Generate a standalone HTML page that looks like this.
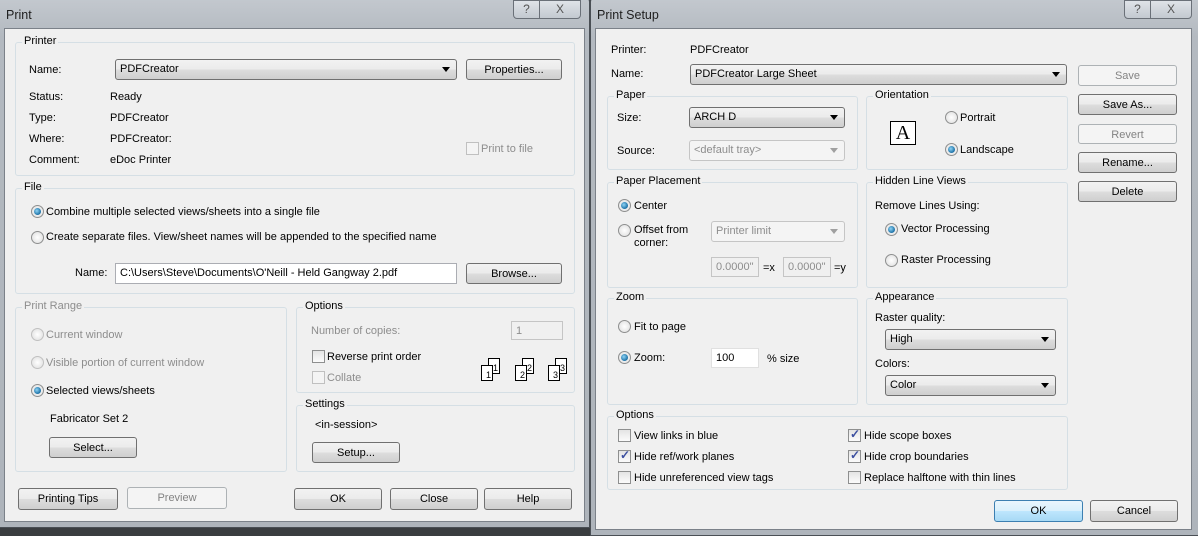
<!DOCTYPE html>
<html><head><meta charset="utf-8"><style>
*{box-sizing:border-box;margin:0;padding:0}
body{width:1198px;height:535px;position:relative;overflow:hidden;background:#3a3d40;font-family:"Liberation Sans",sans-serif;font-size:11px;color:#000}
div,span{position:absolute}
.frame{background:linear-gradient(#c4c9cf,#b3b9c0 40px,#aeb4bb);border:1px solid #4a4f55;border-radius:6px 6px 0 0}
.client{background:#f0f0f0;border:1px solid #7b8189}
.title{font-size:12.5px;color:#1e1e1e}
.tb{height:19px;border:1px solid #6a7078;background:linear-gradient(#dfe3e8,#c3c9d0);border-radius:0 0 4px 4px;color:#555;text-align:center;font-size:12px;line-height:17px}
.g{border:1px solid #d5dfe5;border-radius:3px}
.gl{background:#f0f0f0;padding:0 2px;top:-8px;left:6px;white-space:nowrap}
.t{white-space:nowrap;margin-top:1px}
.btn{border:1px solid #707070;border-radius:3px;background:linear-gradient(#f2f2f2 0,#ebebeb 50%,#dddddd 51%,#cfcfcf);text-align:center;line-height:20px;white-space:nowrap}
.dis{border-color:#adb2b5;background:#f4f4f4;color:#838383}
.combo{border:1px solid #707070;border-radius:3px;background:linear-gradient(#f2f2f2,#ebebeb 50%,#dddddd 51%,#cfcfcf);padding-left:4px;line-height:19px;white-space:nowrap}
.combo:after{content:"";position:absolute;right:6px;top:7px;border:4px solid transparent;border-top:5px solid #000;border-bottom:0}
.cdis{background:#f4f4f4;border-color:#c5c5c5;color:#8d8d8d}
.cdis:after{border-top-color:#a0a0a0}
.inp{border:1px solid #abadb3;background:#fff;padding-left:4px;line-height:19px;white-space:nowrap}
.idis{background:#f0f0f0;border-color:#c5c5c5;color:#8d8d8d}
.r{width:13px;height:13px;border-radius:50%;border:1px solid #8e8f8f;background:radial-gradient(#fff,#dcdcdc)}
.r.on:after{content:"";position:absolute;left:2px;top:2px;width:7px;height:7px;border-radius:50%;background:radial-gradient(circle at 40% 40%,#8fd4f5,#1a6fa5 70%,#0e3f64)}
.r.d{border-color:#c0c0c0}
.cb{width:13px;height:13px;border:1px solid #8e8f8f;background:linear-gradient(#e4e4e4,#fbfbfb)}
.cb.d{border-color:#c0c0c0;background:#f4f4f4}
.cb.on:after{content:"\2713";position:absolute;left:1px;top:-3px;font-size:12px;color:#3c4fa0;font-weight:bold}
.gr{color:#8d8d8d}
.pg{width:12px;height:16px;border:1px solid #000;background:#fff;font-size:9px;line-height:9px;text-align:right;padding:5px 1px 0 0}
</style></head><body>
<div class="frame" style="left:-2px;top:-4px;width:592px;height:532px"></div>
<span class="title" style="left:6px;top:8px">Print</span>
<div class="tb" style="left:513px;top:0;width:27px;border-radius:0 0 0 4px">?</div>
<div class="tb" style="left:539px;top:0;width:42px;border-radius:0 0 4px 0">X</div>
<div class="client" style="left:4px;top:28px;width:581px;height:494px"></div>

<div class="g" style="left:15px;top:42px;width:560px;height:134px"><span class="gl">Printer</span></div>
<span class="t" style="left:29px;top:63px">Name:</span>
<div class="combo" style="left:115px;top:59px;width:342px;height:21px">PDFCreator</div>
<div class="btn" style="left:466px;top:59px;width:96px;height:21px">Properties...</div>
<span class="t" style="left:29px;top:90px">Status:</span><span class="t" style="left:110px;top:90px">Ready</span>
<span class="t" style="left:29px;top:111px">Type:</span><span class="t" style="left:110px;top:111px">PDFCreator</span>
<span class="t" style="left:29px;top:132px">Where:</span><span class="t" style="left:110px;top:132px">PDFCreator:</span>
<span class="t" style="left:29px;top:153px">Comment:</span><span class="t" style="left:110px;top:153px">eDoc Printer</span>
<div class="cb d" style="left:466px;top:142px"></div><span class="t gr" style="left:481px;top:142px">Print to file</span>

<div class="g" style="left:15px;top:188px;width:560px;height:106px"><span class="gl">File</span></div>
<div class="r on" style="left:31px;top:205px"></div><span class="t" style="left:46px;top:205px">Combine multiple selected views/sheets into a single file</span>
<div class="r" style="left:31px;top:231px"></div><span class="t" style="left:46px;top:230px">Create separate files. View/sheet names will be appended to the specified name</span>
<span class="t" style="left:75px;top:266px">Name:</span>
<div class="inp" style="left:115px;top:263px;width:342px;height:21px">C:\Users\Steve\Documents\O'Neill - Held Gangway 2.pdf</div>
<div class="btn" style="left:466px;top:263px;width:96px;height:21px">Browse...</div>

<div class="g" style="left:15px;top:307px;width:272px;height:165px"><span class="gl gr">Print Range</span></div>
<div class="r d" style="left:31px;top:328px"></div><span class="t gr" style="left:46px;top:328px">Current window</span>
<div class="r d" style="left:31px;top:356px"></div><span class="t gr" style="left:46px;top:356px">Visible portion of current window</span>
<div class="r on" style="left:31px;top:384px"></div><span class="t" style="left:46px;top:384px">Selected views/sheets</span>
<span class="t" style="left:50px;top:412px">Fabricator Set 2</span>
<div class="btn" style="left:49px;top:437px;width:88px;height:21px">Select...</div>

<div class="g" style="left:296px;top:307px;width:279px;height:86px"><span class="gl">Options</span></div>
<span class="t gr" style="left:311px;top:324px">Number of copies:</span>
<div class="inp idis" style="left:511px;top:321px;width:52px;height:19px">1</div>
<div class="cb" style="left:312px;top:350px"></div><span class="t" style="left:327px;top:350px">Reverse print order</span>
<div class="cb d" style="left:312px;top:371px"></div><span class="t gr" style="left:327px;top:371px">Collate</span>
<div class="pg" style="left:488px;top:358px">1</div><div class="pg" style="left:481px;top:365px">1</div>
<div class="pg" style="left:522px;top:358px">2</div><div class="pg" style="left:515px;top:365px">2</div>
<div class="pg" style="left:555px;top:358px">3</div><div class="pg" style="left:548px;top:365px">3</div>

<div class="g" style="left:296px;top:405px;width:279px;height:67px"><span class="gl">Settings</span></div>
<span class="t" style="left:315px;top:418px">&lt;in-session&gt;</span>
<div class="btn" style="left:312px;top:442px;width:88px;height:21px">Setup...</div>

<div class="btn" style="left:18px;top:488px;width:100px;height:22px">Printing Tips</div>
<div class="btn dis" style="left:127px;top:487px;width:100px;height:22px">Preview</div>
<div class="btn" style="left:294px;top:488px;width:88px;height:22px">OK</div>
<div class="btn" style="left:390px;top:488px;width:88px;height:22px">Close</div>
<div class="btn" style="left:484px;top:488px;width:88px;height:22px">Help</div>

<div class="frame" style="left:590px;top:-4px;width:612px;height:540px"></div>
<span class="title" style="left:597px;top:8px">Print Setup</span>
<div class="tb" style="left:1124px;top:0;width:27px;border-radius:0 0 0 4px">?</div>
<div class="tb" style="left:1150px;top:0;width:42px;border-radius:0 0 4px 0">X</div>
<div class="client" style="left:595px;top:28px;width:597px;height:502px"></div>

<span class="t" style="left:611px;top:43px">Printer:</span><span class="t" style="left:690px;top:43px">PDFCreator</span>
<span class="t" style="left:611px;top:67px">Name:</span>
<div class="combo" style="left:690px;top:64px;width:377px;height:21px">PDFCreator Large Sheet</div>
<div class="btn dis" style="left:1078px;top:65px;width:99px;height:21px">Save</div>
<div class="btn" style="left:1078px;top:94px;width:99px;height:21px">Save As...</div>
<div class="btn dis" style="left:1078px;top:124px;width:99px;height:20px">Revert</div>
<div class="btn" style="left:1078px;top:152px;width:99px;height:21px">Rename...</div>
<div class="btn" style="left:1078px;top:181px;width:99px;height:21px">Delete</div>

<div class="g" style="left:607px;top:96px;width:251px;height:74px"><span class="gl">Paper</span></div>
<span class="t" style="left:617px;top:111px">Size:</span>
<div class="combo" style="left:689px;top:107px;width:156px;height:21px">ARCH D</div>
<span class="t" style="left:617px;top:144px">Source:</span>
<div class="combo cdis" style="left:689px;top:140px;width:156px;height:21px">&lt;default tray&gt;</div>

<div class="g" style="left:866px;top:96px;width:202px;height:74px"><span class="gl">Orientation</span></div>
<div style="left:890px;top:121px;width:26px;height:24px;border:1px solid #000;background:#fff;font-family:'Liberation Serif',serif;font-size:20px;line-height:22px;text-align:center">A</div>
<div class="r" style="left:945px;top:111px"></div><span class="t" style="left:960px;top:111px">Portrait</span>
<div class="r on" style="left:945px;top:143px"></div><span class="t" style="left:960px;top:143px">Landscape</span>

<div class="g" style="left:607px;top:182px;width:251px;height:106px"><span class="gl">Paper Placement</span></div>
<div class="r on" style="left:618px;top:199px"></div><span class="t" style="left:634px;top:199px">Center</span>
<div class="r" style="left:618px;top:224px"></div><span class="t" style="left:634px;top:223px;line-height:13px">Offset from<br>corner:</span>
<div class="combo cdis" style="left:711px;top:221px;width:134px;height:21px">Printer limit</div>
<div class="inp idis" style="left:711px;top:257px;width:48px;height:20px">0.0000"</div><span class="t" style="left:763px;top:261px">=x</span>
<div class="inp idis" style="left:783px;top:257px;width:48px;height:20px">0.0000"</div><span class="t" style="left:834px;top:261px">=y</span>

<div class="g" style="left:866px;top:182px;width:202px;height:106px"><span class="gl">Hidden Line Views</span></div>
<span class="t" style="left:875px;top:199px">Remove Lines Using:</span>
<div class="r on" style="left:885px;top:223px"></div><span class="t" style="left:901px;top:222px">Vector Processing</span>
<div class="r" style="left:885px;top:254px"></div><span class="t" style="left:901px;top:253px">Raster Processing</span>

<div class="g" style="left:607px;top:298px;width:251px;height:107px"><span class="gl">Zoom</span></div>
<div class="r" style="left:618px;top:320px"></div><span class="t" style="left:634px;top:320px">Fit to page</span>
<div class="r on" style="left:618px;top:351px"></div><span class="t" style="left:634px;top:351px">Zoom:</span>
<div class="inp" style="left:711px;top:348px;width:48px;height:20px;border-color:#e0e0e0">100</div>
<span class="t" style="left:767px;top:352px">% size</span>

<div class="g" style="left:866px;top:298px;width:202px;height:107px"><span class="gl">Appearance</span></div>
<span class="t" style="left:875px;top:311px">Raster quality:</span>
<div class="combo" style="left:885px;top:329px;width:171px;height:21px">High</div>
<span class="t" style="left:875px;top:357px">Colors:</span>
<div class="combo" style="left:885px;top:375px;width:171px;height:21px">Color</div>

<div class="g" style="left:607px;top:416px;width:461px;height:74px"><span class="gl">Options</span></div>
<div class="cb" style="left:618px;top:429px"></div><span class="t" style="left:634px;top:429px">View links in blue</span>
<div class="cb on" style="left:618px;top:450px"></div><span class="t" style="left:634px;top:450px">Hide ref/work planes</span>
<div class="cb" style="left:618px;top:471px"></div><span class="t" style="left:634px;top:471px">Hide unreferenced view tags</span>
<div class="cb on" style="left:848px;top:429px"></div><span class="t" style="left:864px;top:429px">Hide scope boxes</span>
<div class="cb on" style="left:848px;top:450px"></div><span class="t" style="left:864px;top:450px">Hide crop boundaries</span>
<div class="cb" style="left:848px;top:471px"></div><span class="t" style="left:864px;top:471px">Replace halftone with thin lines</span>

<div class="btn" style="left:994px;top:500px;width:89px;height:22px;border-color:#3c7fb1;background:linear-gradient(#eaf6fd,#d9f0fc 50%,#bee6fd 51%,#a7d9f5)">OK</div>
<div class="btn" style="left:1090px;top:500px;width:88px;height:22px">Cancel</div>
</body></html>
